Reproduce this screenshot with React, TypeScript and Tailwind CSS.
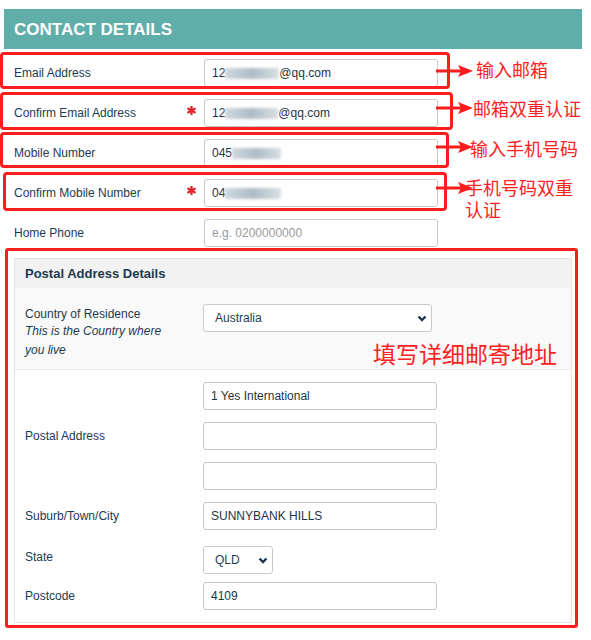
import type { ReactNode } from 'react';

const LABEL = 'text-[12px] text-[#1d3a4e]';

function Blurred({ w }: { w: string }) {
  return (
    <span
      className={`inline-block h-[11px] ${w} bg-gradient-to-r from-[#cfd8de] via-[#aebcc7] to-[#d9e0e4] blur-[1.5px]`}
    />
  );
}

function Star() {
  return (
    <svg width="9" height="9" viewBox="0 0 10 10" className="-mt-[6px]">
      <g stroke="#e0262c" strokeWidth="2.6" strokeLinecap="round">
        <line x1="5" y1="1" x2="5" y2="9" />
        <line x1="1.5" y1="3" x2="8.5" y2="7" />
        <line x1="1.5" y1="7" x2="8.5" y2="3" />
      </g>
    </svg>
  );
}

function Arrow({ className }: { className: string }) {
  return (
    <svg width="38" height="14" viewBox="0 0 38 14" className={className}>
      <line x1="0" y1="7" x2="26" y2="7" stroke="#fd1d1d" strokeWidth="3" />
      <polygon points="22,1 37,7 22,13 25,7" fill="#fd1d1d" />
    </svg>
  );
}

function Chevron() {
  return (
    <svg width="10" height="7" viewBox="0 0 10 7">
      <path d="M1.5 1.5 L5 5 L8.5 1.5" fill="none" stroke="#1a3550" strokeWidth="2.4" />
    </svg>
  );
}

function Field({ children, muted }: { children?: ReactNode; muted?: boolean }) {
  return (
    <div
      className={`flex h-[28px] w-[234px] items-center rounded-[3px] border border-[#c9c9c9] bg-white px-[7px] text-[12px] ${
        muted ? 'text-[#9a9a9a]' : 'text-[#1f3344]'
      }`}
    >
      {children}
    </div>
  );
}

function Row({
  label,
  required,
  children,
  muted,
  annotation,
}: {
  label: string;
  required?: boolean;
  children?: ReactNode;
  muted?: boolean;
  annotation?: ReactNode;
}) {
  return (
    <div className="relative flex h-[40px] items-center">
      <div className={`w-[184px] pl-[14px] ${LABEL}`}>{label}</div>
      <div className="flex w-[14px] justify-center">{required && <Star />}</div>
      <div className="ml-[6px]">
        <Field muted={muted}>{children}</Field>
      </div>
      {annotation}
    </div>
  );
}

function FakeSelect({ value, w }: { value: string; w: string }) {
  return (
    <div
      className={`flex h-[28px] ${w} items-center justify-between rounded-[3px] border border-[#c9c9c9] bg-white pl-[11px] pr-[4px] text-[12px] text-[#1d3b52]`}
    >
      <span>{value}</span>
      <Chevron />
    </div>
  );
}

const NOTE = "font-['Noto_Sans_CJK_SC',sans-serif] text-[#fd2222]";

export default function App() {
  return (
    <div className="h-[640px] w-[591px] overflow-hidden bg-white pt-[9px] font-['Liberation_Sans',Arial,sans-serif]">
      <div className="ml-[4px] flex h-[40px] w-[578px] items-center bg-[#60aeaa] pl-[10px] pt-[1px] text-[17px] font-bold text-white">
        CONTACT DETAILS
      </div>

      <div className="mt-[4px]">
        <Row
          label="Email Address"
          annotation={
            <>
              <div className="pointer-events-none absolute left-0 top-[-1px] h-[37px] w-[450px] rounded-[4px] border-[3px] border-[#fd1d1d]" />
              <Arrow className="absolute left-[436px] top-[11px]" />
              <span className={`absolute left-[476px] top-[7px] text-[18px] leading-[18px] ${NOTE}`}>输入邮箱</span>
            </>
          }
        >
          12
          <Blurred w="w-[54px]" />
          @qq.com
        </Row>
        <Row
          label="Confirm Email Address"
          required
          annotation={
            <>
              <div className="pointer-events-none absolute left-0 top-[-1px] h-[38px] w-[453px] rounded-[4px] border-[3px] border-[#fd1d1d]" />
              <Arrow className="absolute left-[436px] top-[8px]" />
              <span className={`absolute left-[473px] top-[6px] text-[18px] leading-[18px] ${NOTE}`}>邮箱双重认证</span>
            </>
          }
        >
          12
          <Blurred w="w-[53px]" />
          @qq.com
        </Row>
        <Row
          label="Mobile Number"
          annotation={
            <>
              <div className="pointer-events-none absolute left-0 top-[-1px] h-[36px] w-[449px] rounded-[4px] border-[3px] border-[#fd1d1d]" />
              <Arrow className="absolute left-[436px] top-[7px]" />
              <span className={`absolute left-[470px] top-[6px] text-[18px] leading-[18px] ${NOTE}`}>输入手机号码</span>
            </>
          }
        >
          045
          <Blurred w="w-[49px]" />
        </Row>
        <Row
          label="Confirm Mobile Number"
          required
          annotation={
            <>
              <div className="pointer-events-none absolute left-[3px] top-[-1px] h-[39px] w-[444px] rounded-[4px] border-[3px] border-[#fd1d1d]" />
              <Arrow className="absolute left-[436px] top-[8px]" />
              <span className={`absolute left-[465px] top-[3px] w-[120px] text-[18px] leading-[22px] ${NOTE}`}>
                手机号码双重认证
              </span>
            </>
          }
        >
          04
          <Blurred w="w-[56px]" />
        </Row>
        <Row label="Home Phone" muted>
          e.g. 0200000000
        </Row>
      </div>

      {/* Postal address panel, outlined in red */}
      <div className="-mt-[5px] ml-[5px] w-[573px] rounded-[3px] border-[3px] border-[#fd1d1d] pb-[2px] pl-[6px] pr-[3px] pt-[7px]">
        <div className="border border-[#e4e4e4]">
          <div className="flex h-[29px] items-center bg-[#f2f2f2] pl-[10px] text-[13px] font-bold text-[#1d3a4e]">
            Postal Address Details
          </div>

          <div className="relative flex h-[82px] border-b border-[#e8e8e8] bg-[#f9f9f9] pt-[16px]">
            <div className={`w-[188px] pl-[10px] pt-[3px] ${LABEL}`}>
              <div className="leading-[15px]">Country of Residence</div>
              <div className="max-w-[150px] italic leading-[19px]">This is the Country where you live</div>
            </div>
            <FakeSelect value="Australia" w="w-[229px]" />
            <span className={`absolute left-[358px] top-[54px] text-[23px] leading-[23px] ${NOTE}`}>填写详细邮寄地址</span>
          </div>

          <div className="pb-[12px] pt-[12px]">
            <div className="flex items-center">
              <div className={`w-[188px] pl-[10px] ${LABEL}`}>Postal Address</div>
              <div className="flex flex-col gap-[12px]">
                <Field>1 Yes International</Field>
                <Field />
                <Field />
              </div>
            </div>
            <div className="mt-[12px] flex items-center">
              <div className={`w-[188px] pl-[10px] ${LABEL}`}>Suburb/Town/City</div>
              <Field>SUNNYBANK HILLS</Field>
            </div>
            <div className="mt-[16px] flex items-start">
              <div className={`w-[188px] pl-[10px] pt-[2px] ${LABEL}`}>State</div>
              <FakeSelect value="QLD" w="w-[70px]" />
            </div>
            <div className="mt-[8px] flex items-center">
              <div className={`w-[188px] pl-[10px] ${LABEL}`}>Postcode</div>
              <Field>4109</Field>
            </div>
          </div>
        </div>
      </div>
    </div>
  );
}
